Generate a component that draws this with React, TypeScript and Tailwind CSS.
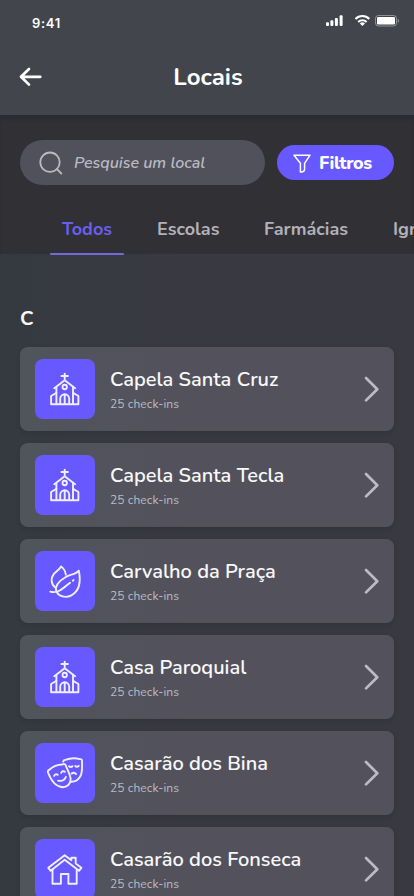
import type { ReactNode } from "react";

type Kind = "church" | "leaf" | "masks" | "house";

const places: { name: string; kind: Kind }[] = [
  { name: "Capela Santa Cruz", kind: "church" },
  { name: "Capela Santa Tecla", kind: "church" },
  { name: "Carvalho da Praça", kind: "leaf" },
  { name: "Casa Paroquial", kind: "church" },
  { name: "Casarão dos Bina", kind: "masks" },
  { name: "Casarão dos Fonseca", kind: "house" },
];

const drawings: Record<Kind, ReactNode> = {
  church: (
    <>
      <path d="M29.7 14.8v6.6M26.5 17h6.4M19.3 29.2l10.4-7.9 10.4 7.9M21.4 27.8v17.3M38 27.8v17.3" />
      <path d="M21.4 33.7 16.1 37v8.2h27.3V37L38 33.7" />
      <circle cx="29.7" cy="28" r="2.2" />
      <path d="M25.2 45v-5.2a4.5 4.5 0 0 1 9 0V45M29.7 35.5V45" />
    </>
  ),
  leaf: (
    <>
      <path d="M20.3 36.5c-4.6-3.8-4.7-9.3-1.4-13.6 2.6-3.2 5.9-4.2 7.2-7.5 2.8 2.4 4.4 5 4.7 8.2" />
      <path d="M43.8 19.6c-3.1 4-8.3 3.6-13.4 6.6-7 4.1-10.4 9.2-9.2 14 2.4 5.3 9.4 7.3 15.2 4.1 8.5-4.7 9.3-15.3 7.4-24.7Z" />
      <path d="M15.3 40.6c8.2 2.5 14-4.5 19.8-8.9M37.8 29.7l.7-.6" />
    </>
  ),
  masks: (
    <>
      <path d="M13 29.5c-.4-1.2.2-2.2 1.4-2.8 3.2-3 8.4-5.1 13-5.2 1.5-.8 2.8-.6 3.3.8 1.6 4.8 4.9 9.4 4.9 14.2 0 4.4-3.3 7.6-8 7.7-7.2-.5-11.9-7.6-14.6-14.7Z" />
      <path d="M28.3 18.6c.1-1.2.8-1.7 2-1.7 4.7-1.9 10.4-2 14.6-.8 1.4-.1 2.2.6 2.2 1.9-.3 5.1.7 10.7-1.6 15-1.8 3.3-4.6 5.7-9 5.8" />
      <path d="M19.2 32.8c.6-1.6 2.2-2 3.5-1M26.2 29.8c.7-1.7 2.4-2 3.6-1M23.1 37.6c3.4.9 6.6-.5 7.8-3.7" />
      <path d="M34 23.3c1.2.9 2.3.9 3.4-.1M40.3 23.1c1.3.9 2.4.7 3.4-.3M36.6 30.6c1.6-1.1 3.2-.9 4.4.4" />
    </>
  ),
  house: (
    <>
      <path d="m13.3 28.8 16.4-12.6 6.6 5v-2.4h4.4v5.8l5.7 4.2-2.4 3-14.3-11-14 11Z" />
      <path d="M17.5 30.8v13.9h8.4V35h7.5v9.7h8.3V30.8" />
    </>
  ),
};

function Arrow() {
  return (
    <svg className="size-6" viewBox="0 0 24 24" fill="none" stroke="currentColor" strokeWidth="2.7" strokeLinecap="round" strokeLinejoin="round">
      <path d="M22.3 11.8H3M11 4l-8 7.8 8 7.8" />
    </svg>
  );
}

function StatusIcons() {
  return (
    <svg className="h-4 w-[76px]" viewBox="0 0 76 16" fill="currentColor">
      <rect x="2" y="9.3" width="3" height="3.7" rx="1" />
      <rect x="6.4" y="7.3" width="3" height="5.7" rx="1" />
      <rect x="10.9" y="5" width="3" height="8" rx="1" />
      <rect x="15.6" y="2.3" width="3" height="10.7" rx="1" />
      <g fill="none" stroke="currentColor" strokeWidth="2.1">
        <path d="M31.5 6a9.6 9.6 0 0 1 13.8 0M34.2 8.9a6 6 0 0 1 8.4 0" />
      </g>
      <path d="m38.4 13-2.6-2.6a3.8 3.8 0 0 1 5.2 0Z" />
      <rect x="51.5" y="2.5" width="21" height="10.5" rx="3" fill="none" stroke="currentColor" opacity=".4" />
      <rect x="53" y="4" width="18" height="7.5" rx="1.3" />
      <path d="M73.8 6v3.7c.8-.4 1.1-1 1.1-1.8s-.3-1.5-1.1-1.9Z" opacity=".5" />
    </svg>
  );
}

function Place({ name, kind }: { name: string; kind: Kind }) {
  return (
    <li className="flex h-[84px] shrink-0 items-center rounded-lg bg-linear-to-r from-[#50545c] to-[#53525c] to-40% pr-3 pl-[15px] shadow-[0_2px_5px_rgba(0,0,0,0.12)]">
      <div className="size-[60px] shrink-0 rounded-lg bg-[#6759ff] text-[#f1efff]">
        <svg className="size-full" viewBox="0 0 60 60" fill="none" stroke="currentColor" strokeWidth="1.9" strokeLinecap="round" strokeLinejoin="round">
          {drawings[kind]}
        </svg>
      </div>
      <div className="ml-[15px] flex-1 pt-0.5 whitespace-nowrap">
        <h3 className="text-xl leading-7 font-semibold text-[#f8f8fa]">{name}</h3>
        <p className="text-xs leading-5 tracking-[0.1px] text-[#babac2]">25 check-ins</p>
      </div>
      <svg className="h-7 w-5 shrink-0 text-[#bcbcc6]" viewBox="0 0 20 28" fill="none" stroke="currentColor" strokeWidth="2.7" strokeLinecap="round" strokeLinejoin="round">
        <path d="m4 3 11.3 11.2L4 25.4" />
      </svg>
    </li>
  );
}

export default function App() {
  return (
    <div className="flex h-[896px] w-[414px] flex-col overflow-hidden bg-linear-to-r from-[#353a40] to-[#393941] to-50% font-['Nunito','Lato',sans-serif]">
      <header className="h-[115px] shrink-0 bg-[#42464c] text-white">
        <div className="flex h-[46px] items-start justify-between pr-[14px] pl-8">
          <span className="pt-[14px] font-['Inter',sans-serif] text-[13px] leading-[18px] font-semibold tracking-[0.7px]">9:41</span>
          <div className="pt-[13px]">
            <StatusIcons />
          </div>
        </div>
        <div className="grid h-[61px] grid-cols-[49px_1fr_47px] items-center">
          <button className="ml-[18px] w-6" aria-label="Voltar">
            <Arrow />
          </button>
          <h1 className="pt-px text-center text-2xl font-bold">Locais</h1>
        </div>
      </header>

      <section className="h-[139px] shrink-0 bg-[#303035] shadow-[inset_0_5px_3px_-1px_#2a2d32]">
        <div className="flex items-center gap-3 px-5 pt-[25px]">
          <div className="flex h-[45px] w-[245px] items-center rounded-full bg-[#50515b] pl-[19px] text-[#b9bac1]">
            <svg className="size-6" viewBox="0 0 24 24" fill="none" stroke="currentColor" strokeWidth="1.8" strokeLinecap="round">
              <circle cx="11" cy="11.2" r="9.7" />
              <path d="m18 18.2 4.3 4.3" />
            </svg>
            <span className="ml-[11px] text-base font-semibold italic">Pesquise um local</span>
          </div>
          <button className="flex h-[35px] w-[117px] items-center rounded-full bg-[#6759ff] pl-4 text-white">
            <svg className="h-5 w-[18px]" viewBox="0 0 18 20" fill="none" stroke="currentColor" strokeWidth="1.5" strokeLinejoin="round">
              <path d="M1 2.2h16l-5.4 8.1v6c0 1.6-1.4 2.7-3.4 2.7H7.4v-8.7Z" />
            </svg>
            <span className="ml-2 text-lg font-extrabold tracking-[-0.4px]">Filtros</span>
          </button>
        </div>
        <nav className="mt-[20px] flex h-[51px] text-lg font-bold whitespace-nowrap text-[#b2b1b8]">
          <div className="ml-[49px] flex w-[75px] shrink-0 flex-col text-center text-[#6b5eea]">
            <span className="h-12 pl-px leading-[48px]">Todos</span>
            <span className="ml-px h-0.5 rounded-full bg-[#7469db]" />
          </div>
          <span className="ml-[33px] w-[107px] shrink-0 leading-[48px]">Escolas</span>
          <span className="w-[129px] shrink-0 leading-[48px]">Farmácias</span>
          <span className="shrink-0 leading-[48px]">Igrejas</span>
        </nav>
      </section>

      <main className="px-5 pt-[51px]">
        <h2 className="text-xl leading-7 font-bold text-[#f8f8fa]">C</h2>
        <ul className="mt-[14px] flex flex-col gap-3">
          {places.map((place) => (
            <Place key={place.name} {...place} />
          ))}
        </ul>
      </main>
    </div>
  );
}
